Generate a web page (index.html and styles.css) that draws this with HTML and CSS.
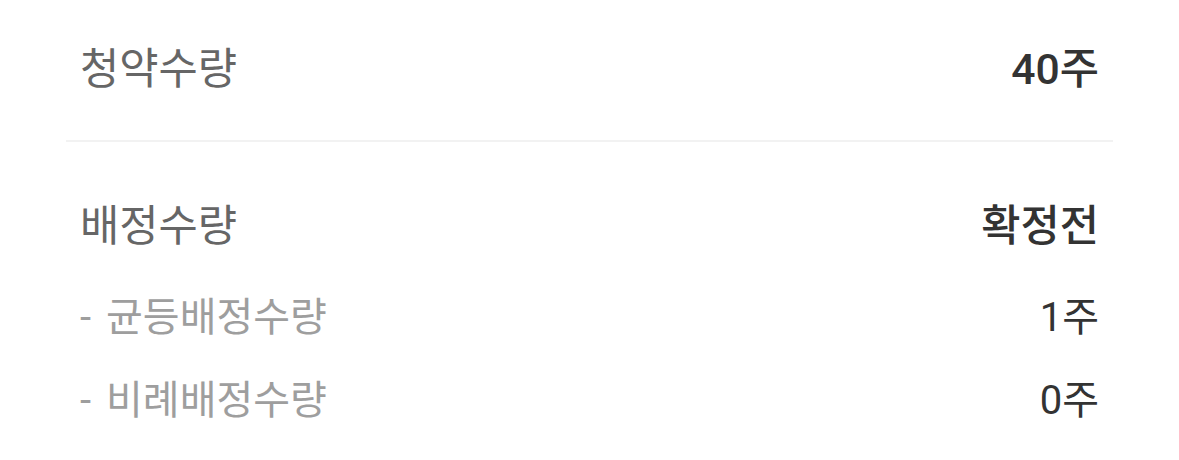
FILE: index.html
```html
<!DOCTYPE html>
<html lang="ko">
<head>
<meta charset="utf-8">
<link rel="stylesheet" href="styles.css">
</head>
<body>
<div class="card">
  <section class="block top">
    <div class="row">
      <span class="label">청약수량</span>
      <span class="value strong">40주</span>
    </div>
  </section>
  <section class="block bottom">
    <div class="row">
      <span class="label">배정수량</span>
      <span class="value strong">확정전</span>
    </div>
    <div class="row sub first">
      <span class="label sublabel"><span class="dash">-</span>균등배정수량</span>
      <span class="value">1주</span>
    </div>
    <div class="row sub">
      <span class="label sublabel"><span class="dash">-</span>비례배정수량</span>
      <span class="value">0주</span>
    </div>
  </section>
</div>
</body>
</html>
```
FILE: styles.css
```css
* { box-sizing: border-box; }
html, body { margin: 0; padding: 0; background: #ffffff; }
body {
  font-family: Roboto, "Noto Sans CJK KR", sans-serif;
  font-size: 42.67px;
  width: 1179px;
  height: 460px;
  overflow: hidden;
}
.card {
  padding: 0 66px;
  display: flex;
  flex-direction: column;
}
.block { display: flex; flex-direction: column; }
.top {
  padding-top: 44px;
  padding-bottom: 46px;
  border-bottom: 2px solid #f2f2f2;
}
.bottom { padding-top: 59px; }
.row {
  display: flex;
  justify-content: space-between;
  align-items: center;
  height: 50px;
  line-height: 50px;
  padding: 0 14px;
}
.row.sub { font-size: 40px; }
.row.sub.first { margin-top: 42px; }
.row.sub + .row.sub { margin-top: 33px; }
.label { color: #666666; }
.sublabel { color: #9e9e9e; }
.dash { margin-right: 15px; }
.value { color: #333333; }
.strong { font-weight: 500; }
```
